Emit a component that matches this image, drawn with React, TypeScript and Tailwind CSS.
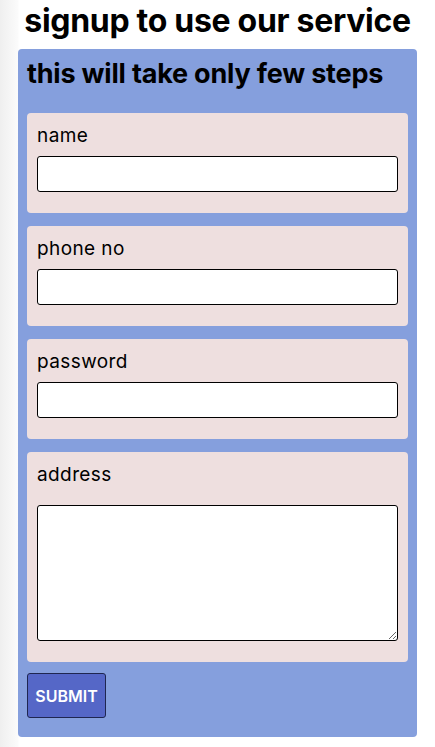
import { ReactNode } from "react";

function Field({ label, children, gap = "mt-[9px]" }: { label: string; children: ReactNode; gap?: string }) {
  return (
    <div className="rounded-[4px] bg-[#eedfdf] px-[10px] pt-[12px] pb-[21px]">
      <label className="block text-[19px] leading-[22px] tracking-[0.4px] text-black">{label}</label>
      <div className={gap}>{children}</div>
    </div>
  );
}

export default function App() {
  return (
    <div className="min-h-screen bg-[linear-gradient(to_right,#efefef,#fbfbfb_18px,#ffffff_19px)] font-['Inter',sans-serif]">
      <h1 className="pt-[2px] text-center text-[32px] font-bold leading-[38px] tracking-[-0.3px] text-black">
        signup to use our service
      </h1>
      <form className="mx-[18px] mt-[9px] rounded-[4px] bg-[#859fdd] px-[9px] pt-[9px] pb-[19px]">
        <h2 className="text-[27px] font-bold leading-[32px] tracking-[-0.2px] text-black">this will take only few steps</h2>
        <div className="mt-[23px] flex flex-col gap-[13px]">
          <Field label="name">
            <input type="text" className="block h-[36px] w-full rounded-[3px] border border-black bg-white px-2" />
          </Field>
          <Field label="phone no">
            <input type="text" className="block h-[36px] w-full rounded-[3px] border border-black bg-white px-2" />
          </Field>
          <Field label="password">
            <input type="password" className="block h-[36px] w-full rounded-[3px] border border-black bg-white px-2" />
          </Field>
          <Field label="address" gap="mt-[19px]">
            <textarea className="block h-[136px] w-full resize-y rounded-[3px] border border-black bg-white px-2" />
          </Field>
        </div>
        <button
          type="button"
          className="mt-[11px] h-[45px] w-[79px] rounded-[3px] border border-[#1f2650] bg-[#5567c7] text-[16px] font-semibold text-white"
        >
          SUBMIT
        </button>
      </form>
    </div>
  );
}
